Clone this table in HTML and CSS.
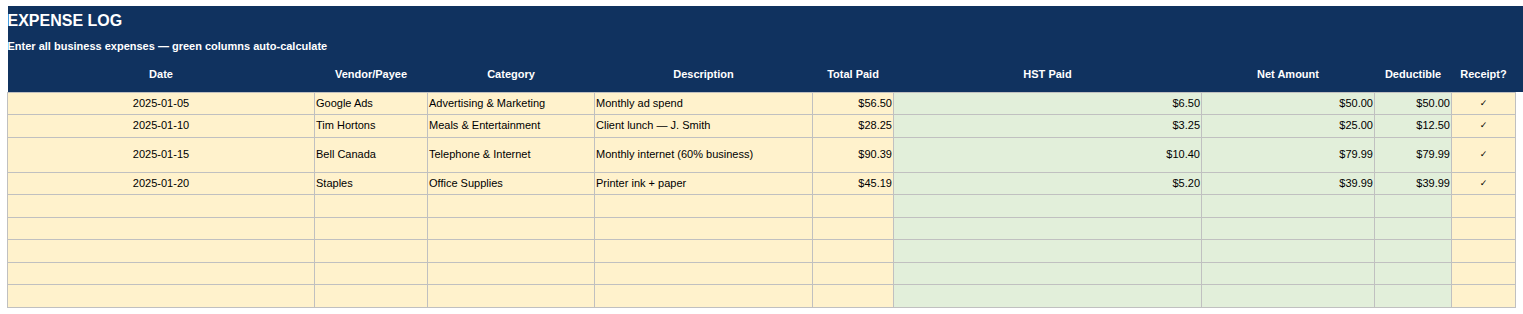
FILE: index.html
```html
<!DOCTYPE html>
<html lang="en">
<head>
<meta charset="utf-8">
<title>Expense Log</title>
<link rel="stylesheet" href="styles.css">
</head>
<body>
<table class="sheet">
  <colgroup>
    <col class="c-date"><col class="c-vendor"><col class="c-cat"><col class="c-desc"><col class="c-total"><col class="c-hst"><col class="c-net"><col class="c-ded"><col class="c-rec"><col class="c-pad">
  </colgroup>
  <thead>
    <tr class="r-title"><th colspan="10" class="title">EXPENSE LOG</th></tr>
    <tr class="r-sub"><th colspan="10" class="subtitle">Enter all business expenses — green columns auto-calculate</th></tr>
    <tr class="r-head">
      <th>Date</th><th>Vendor/Payee</th><th>Category</th><th>Description</th><th>Total Paid</th><th>HST Paid</th><th>Net Amount</th><th>Deductible</th><th>Receipt?</th><th></th>
    </tr>
  </thead>
  <tbody>
    <tr class="r-data">
      <td class="in ctr">2025-01-05</td><td class="in">Google Ads</td><td class="in">Advertising &amp; Marketing</td><td class="in">Monthly ad spend</td><td class="in num">$56.50</td><td class="calc num">$6.50</td><td class="calc num">$50.00</td><td class="calc num">$50.00</td><td class="in ctr chk">✓</td>
    </tr>
    <tr class="r-data">
      <td class="in ctr">2025-01-10</td><td class="in">Tim Hortons</td><td class="in">Meals &amp; Entertainment</td><td class="in">Client lunch — J. Smith</td><td class="in num">$28.25</td><td class="calc num">$3.25</td><td class="calc num">$25.00</td><td class="calc num">$12.50</td><td class="in ctr chk">✓</td>
    </tr>
    <tr class="r-tall">
      <td class="in ctr">2025-01-15</td><td class="in">Bell Canada</td><td class="in">Telephone &amp; Internet</td><td class="in">Monthly internet (60% business)</td><td class="in num">$90.39</td><td class="calc num">$10.40</td><td class="calc num">$79.99</td><td class="calc num">$79.99</td><td class="in ctr chk">✓</td>
    </tr>
    <tr class="r-data">
      <td class="in ctr">2025-01-20</td><td class="in">Staples</td><td class="in">Office Supplies</td><td class="in">Printer ink + paper</td><td class="in num">$45.19</td><td class="calc num">$5.20</td><td class="calc num">$39.99</td><td class="calc num">$39.99</td><td class="in ctr chk">✓</td>
    </tr>
    <tr class="r-data"><td class="in"></td><td class="in"></td><td class="in"></td><td class="in"></td><td class="in"></td><td class="calc"></td><td class="calc"></td><td class="calc"></td><td class="in"></td></tr>
    <tr class="r-data"><td class="in"></td><td class="in"></td><td class="in"></td><td class="in"></td><td class="in"></td><td class="calc"></td><td class="calc"></td><td class="calc"></td><td class="in"></td></tr>
    <tr class="r-data"><td class="in"></td><td class="in"></td><td class="in"></td><td class="in"></td><td class="in"></td><td class="calc"></td><td class="calc"></td><td class="calc"></td><td class="in"></td></tr>
    <tr class="r-data"><td class="in"></td><td class="in"></td><td class="in"></td><td class="in"></td><td class="in"></td><td class="calc"></td><td class="calc"></td><td class="calc"></td><td class="in"></td></tr>
    <tr class="r-data"><td class="in"></td><td class="in"></td><td class="in"></td><td class="in"></td><td class="in"></td><td class="calc"></td><td class="calc"></td><td class="calc"></td><td class="in"></td></tr>
  </tbody>
</table>
</body>
</html>
```
FILE: styles.css
```css
html, body {
  margin: 0;
  padding: 0;
  background: #ffffff;
}

body {
  padding: 6px 0 0 7px;
  font-family: "Liberation Sans", Arial, sans-serif;
  font-size: 11px;
  color: #000000;
}

.sheet {
  border-collapse: collapse;
  table-layout: fixed;
  width: 1515px;
}

.c-date { width: 307px; }
.c-vendor { width: 113px; }
.c-cat { width: 167px; }
.c-desc { width: 218px; }
.c-total { width: 81px; }
.c-hst { width: 308px; }
.c-net { width: 173px; }
.c-ded { width: 77px; }
.c-rec { width: 64px; }
.c-pad { width: 7px; }

.sheet th {
  background: #10325f;
  color: #ffffff;
  font-weight: bold;
  padding: 0 2px;
  vertical-align: middle;
  white-space: nowrap;
  overflow: hidden;
}

.r-title { height: 29px; }
.r-sub { height: 22px; }
.r-head { height: 35px; }

.sheet .title {
  text-align: left;
  font-size: 16px;
  padding: 1px 0 0 0;
}

.sheet .subtitle {
  text-align: left;
  font-size: 11px;
  padding: 0 0 0 0;
}

.r-head th {
  text-align: center;
  font-size: 11px;
}

.r-data { height: 22.5px; }
.r-tall { height: 35px; }

.sheet td {
  border: 1px solid #c0c0c0;
  padding: 0 1px 0 1px;
  vertical-align: middle;
  white-space: nowrap;
  overflow: hidden;
  line-height: 13px;
}

.in { background: #fff2cc; }
.calc { background: #e2efda; }

.num { text-align: right; }
.ctr { text-align: center; }

.chk {
  font-family: "DejaVu Sans", sans-serif;
  font-size: 9px;
}
```
